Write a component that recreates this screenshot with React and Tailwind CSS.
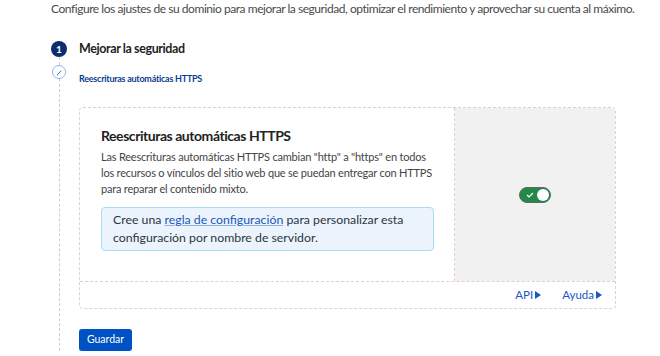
import React, { useState } from 'react';

const Arrow = () => (
    <svg width="6" height="8" viewBox="0 0 6 8" className="ml-[2px] inline-block">
        <path d="M0 0 L6 4 L0 8 Z" fill="currentColor" />
    </svg>
);

const App = () => {
    const [enabled, setEnabled] = useState(true);

    return (
        <div className="w-[660px] h-[356px] overflow-hidden bg-white text-[#313131]" style={{ fontFamily: 'Lato, "Noto Sans", sans-serif' }}>
            <p className="pl-[51px] pt-[1px] text-[12px] tracking-[-0.45px] leading-[15px] text-[#4a4a4a] whitespace-nowrap">
                Configure los ajustes de su dominio para mejorar la seguridad, optimizar el rendimiento y aprovechar su cuenta al máximo.
            </p>

            <div className="flex pl-[51px] mt-[25px]">
                {/* stepper rail */}
                <div className="flex flex-col items-center w-[16px]">
                    <div className="w-[16px] h-[16px] rounded-full bg-[#0a2d6e] text-white text-[10px] font-bold flex items-center justify-center">1</div>
                    <div className="h-[8px] border-l border-dashed border-[#c9ced6]"></div>
                    <div className="w-[14px] h-[14px] rounded-full border border-[#8fb4e3] flex items-center justify-center text-[#2d6fc4]">
                        <svg width="7" height="7" viewBox="0 0 8 8">
                            <path d="M1.5 6.5 L6 2" stroke="currentColor" strokeWidth="1.1" fill="none" />
                            <path d="M1.2 6.8 L2.4 6.6" stroke="currentColor" strokeWidth="1" fill="none" />
                        </svg>
                    </div>
                    <div className="flex-1 h-[280px] border-l border-dashed border-[#c9ced6]"></div>
                </div>

                <div className="flex-1 pl-[12px]">
                    <h2 className="text-[12.5px] tracking-[-0.4px] leading-[16px] font-bold text-[#1f1f1f]">Mejorar la seguridad</h2>
                    <p className="mt-[16px] text-[9px] tracking-[-0.25px] leading-[12px] font-bold text-[#0a3d8f]">Reescrituras automáticas HTTPS</p>

                    {/* card */}
                    <div className="mt-[22px] w-[537px] rounded-[4px] border border-dashed border-[#cfd6de] border-t-[#e8cdc6]">
                        <div className="flex h-[173px]">
                            <div className="w-[375px] pl-[21px] pr-[20px] pt-[18px] border-r border-dashed border-[#e8cdc6]">
                                <h3 className="text-[14px] tracking-[-0.45px] leading-[20px] font-bold text-[#222]">Reescrituras automáticas HTTPS</h3>
                                <p className="mt-[3px] w-[336px] text-[11px] tracking-[-0.2px] leading-[16px] text-[#444]">
                                    Las Reescrituras automáticas HTTPS cambian "http" a "https" en todos los recursos o vínculos del sitio web que se puedan entregar con HTTPS para reparar el contenido mixto.
                                </p>
                                <div className="mt-[10px] rounded-[4px] border border-[#a9dcf4] bg-[#ebf4fd] px-[11px] py-[3px] text-[12.3px] leading-[18px] text-[#2c3440]">
                                    Cree una <a className="text-[#1b57b8] underline decoration-[#8fb0e0]">regla de configuración</a> para personalizar esta<br />configuración por nombre de servidor.
                                </div>
                            </div>
                            <div className="flex-1 bg-[#f1f1f1] flex items-center justify-center">
                                <button
                                    onClick={() => setEnabled(!enabled)}
                                    className={`relative w-[32px] h-[16px] rounded-full border border-[#5c6b62] ${enabled ? 'bg-[#23884a]' : 'bg-[#9aa0a6]'}`}
                                >
                                    <svg width="8" height="6" viewBox="0 0 8 6" className="absolute left-[6px] top-[4px]">
                                        <path d="M1 3 L3 5 L7 1" stroke="white" strokeWidth="1.2" fill="none" />
                                    </svg>
                                    <span className={`absolute top-[1px] w-[12px] h-[12px] rounded-full bg-white ${enabled ? 'right-[1px]' : 'left-[1px]'}`}></span>
                                </button>
                            </div>
                        </div>
                        <div className="h-[27px] border-t border-dashed border-[#e8cdc6] flex items-center justify-end gap-[21px] pr-[13px] text-[11.5px] text-[#1b57c4]">
                            <span className="flex items-center">API<Arrow /></span>
                            <span className="flex items-center">Ayuda<Arrow /></span>
                        </div>
                    </div>

                    <button className="mt-[20px] h-[22px] w-[53px] rounded-[3px] bg-[#0051c3] text-white text-[10.5px]">Guardar</button>
                </div>
            </div>
        </div>
    );
};

export default App;
